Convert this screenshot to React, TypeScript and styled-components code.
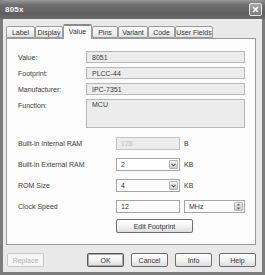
import React from 'react';
import styled, { createGlobalStyle } from 'styled-components';

const GlobalStyle = createGlobalStyle`
  html, body {
    margin: 0;
    padding: 0;
    background: #ffffff;
  }
  * {
    box-sizing: border-box;
  }
`;

const Window = styled.div`
  width: 265px;
  height: 275px;
  display: flex;
  flex-direction: column;
  background: #7c7c7c;
  font-family: 'Liberation Sans', Arial, sans-serif;
  font-size: 7px;
  color: #222;
`;

const TitleBar = styled.div`
  height: 19px;
  flex-shrink: 0;
  display: flex;
  align-items: center;
  justify-content: space-between;
  padding: 0 3px 0 5px;
  background: linear-gradient(#9a9a9a 0%, #6e6e6e 25%, #5f5f5f 70%, #6c6c6c 100%);
  border-radius: 4px 4px 0 0;
`;

const Title = styled.span`
  color: #f4f4f4;
  font-weight: bold;
  font-size: 8px;
  letter-spacing: 0.2px;
`;

const CloseButton = styled.div`
  width: 13px;
  height: 13px;
  border: 1px solid #e8e8e8;
  border-radius: 2px;
  background: linear-gradient(#a8a8a8, #7a7a7a);
  display: flex;
  align-items: center;
  justify-content: center;
`;

const Body = styled.div`
  flex: 1;
  margin: 0 3px 3px 3px;
  background: #e9e9e9;
  display: flex;
  flex-direction: column;
  padding: 4px 6px 0 3px;
`;

const TabRow = styled.div`
  display: flex;
  align-items: flex-end;
  height: 15px;
  padding-left: 0;
  position: relative;
  z-index: 1;
`;

const Tab = styled.div<{ $active?: boolean; $w: number }>`
  width: ${(p) => p.$w}px;
  height: ${(p) => (p.$active ? 15 : 12)}px;
  margin-bottom: ${(p) => (p.$active ? -1 : 0)}px;
  border: 1px solid #9b9b9b;
  border-bottom: ${(p) => (p.$active ? 'none' : '1px solid #9b9b9b')};
  border-radius: 2px 2px 0 0;
  background: ${(p) =>
    p.$active ? '#fcfcfc' : 'linear-gradient(#fdfdfd, #ececec 70%, #e0e0e0)'};
  display: flex;
  align-items: ${(p) => (p.$active ? 'flex-start' : 'center')};
  padding-top: ${(p) => (p.$active ? 2 : 0)}px;
  justify-content: center;
  color: #333;
  ${(p) => (p.$active ? 'border-top: 2px solid #8a8a8a;' : '')}
`;

const Panel = styled.div`
  height: 207px;
  border: 1px solid #9b9b9b;
  background: #fcfcfc;
  padding: 12px 10px 0 11px;
  display: flex;
  flex-direction: column;
`;

const InfoGrid = styled.div`
  display: grid;
  grid-template-columns: 68px 159px;
  grid-auto-rows: 12px;
  row-gap: 4px;
`;

const Label = styled.div<{ $top?: boolean }>`
  display: flex;
  align-items: ${(p) => (p.$top ? 'flex-start' : 'center')};
  padding-top: ${(p) => (p.$top ? 3 : 0)}px;
  color: #3a3a3a;
`;

const ReadField = styled.div<{ $tall?: boolean }>`
  grid-row: ${(p) => (p.$tall ? 'span 2' : 'auto')};
  height: ${(p) => (p.$tall ? 29 : 12)}px;
  background: #ececec;
  border: 1px solid #b8b8b8;
  padding: 1px 5px 0;
  display: flex;
  align-items: ${(p) => (p.$tall ? 'flex-start' : 'center')};
  color: #3a3a3a;
`;

const SettingsGrid = styled.div`
  margin-top: 10px;
  display: grid;
  grid-template-columns: 98px 64px 4px 61px;
  grid-auto-rows: 13px;
  row-gap: 8px;
`;

const Input = styled.div<{ $disabled?: boolean }>`
  height: 13px;
  border: 1px solid ${(p) => (p.$disabled ? '#c4c4c4' : '#a6a6a6')};
  background: ${(p) => (p.$disabled ? '#ececec' : '#ffffff')};
  color: ${(p) => (p.$disabled ? '#c0c0c0' : '#333')};
  display: flex;
  align-items: center;
  padding-left: 4px;
  position: relative;
`;

const Unit = styled.div`
  grid-column: 4;
  display: flex;
  align-items: center;
  color: #3a3a3a;
`;

const DropArrow = styled.div`
  position: absolute;
  right: 1px;
  top: 1px;
  width: 9px;
  height: 9px;
  background: linear-gradient(#f2f2f2, #cdcdcd);
  border: 1px solid #b4b4b4;
  border-radius: 1px;
  display: flex;
  align-items: center;
  justify-content: center;
`;

const Spinner = styled.div`
  position: absolute;
  right: 1px;
  top: 1px;
  width: 9px;
  height: 9px;
  border: 1px solid #b4b4b4;
  border-radius: 1px;
  background: linear-gradient(#f2f2f2, #cdcdcd);
  display: flex;
  flex-direction: column;
  align-items: center;
  justify-content: center;
  gap: 1px;
`;

const UnitField = styled(Input)`
  grid-column: 4;
`;

const ButtonRow = styled.div`
  margin-top: 6px;
  padding-left: 98px;
`;

const Button = styled.div<{ $w?: number; $disabled?: boolean; $default?: boolean }>`
  width: ${(p) => p.$w ?? 37}px;
  height: 14px;
  border: 1px solid ${(p) => (p.$disabled ? '#c8c8c8' : p.$default ? '#5a5a5a' : '#6e6e6e')};
  border-radius: 2px;
  background: ${(p) =>
    p.$disabled ? '#f6f6f6' : 'linear-gradient(#ffffff, #f0f0f0 60%, #dcdcdc)'};
  color: ${(p) => (p.$disabled ? '#b4b4b4' : '#333')};
  display: flex;
  align-items: center;
  justify-content: center;
  ${(p) => (p.$default ? 'box-shadow: inset 0 0 0 1px #a9a9a9;' : '')}
`;

const Footer = styled.div`
  display: flex;
  align-items: center;
  padding: 8px 0 0 1px;
  gap: 7px;
`;

const Spacer = styled.div`
  flex: 1;
`;

const Grip = styled.div`
  position: absolute;
  right: 4px;
  bottom: 4px;
  width: 6px;
  height: 6px;
  background-image: radial-gradient(#9a9a9a 35%, transparent 40%);
  background-size: 2px 2px;
`;

const Frame = styled.div`
  position: relative;
`;

const tabs: [string, number][] = [
  ['Label', 29],
  ['Display', 28],
  ['Value', 29],
  ['Pins', 26],
  ['Variant', 30],
  ['Code', 27],
  ['User Fields', 38],
];

const Chevron = () => (
  <svg width="5" height="4" viewBox="0 0 5 4">
    <path d="M0.5 0.8 L2.5 2.8 L4.5 0.8" stroke="#555" strokeWidth="1.1" fill="none" />
  </svg>
);

const App: React.FC = () => {
  return (
    <Frame>
      <GlobalStyle />
      <Window>
        <TitleBar>
          <Title>805x</Title>
          <CloseButton>
            <svg width="7" height="7" viewBox="0 0 7 7">
              <path d="M1 1 L6 6 M6 1 L1 6" stroke="#fff" strokeWidth="1.6" />
            </svg>
          </CloseButton>
        </TitleBar>
        <Body>
          <TabRow>
            {tabs.map(([name, w]) => (
              <Tab key={name} $w={w} $active={name === 'Value'}>
                {name}
              </Tab>
            ))}
          </TabRow>
          <Panel>
            <InfoGrid>
              <Label>Value:</Label>
              <ReadField>8051</ReadField>
              <Label>Footprint:</Label>
              <ReadField>PLCC-44</ReadField>
              <Label>Manufacturer:</Label>
              <ReadField>IPC-7351</ReadField>
              <Label $top>Function:</Label>
              <ReadField $tall>MCU</ReadField>
            </InfoGrid>
            <SettingsGrid>
              <Label>Built-in Internal RAM</Label>
              <Input $disabled>128</Input>
              <Unit>B</Unit>

              <Label>Built-in External RAM</Label>
              <Input>
                2
                <DropArrow>
                  <Chevron />
                </DropArrow>
              </Input>
              <Unit>KB</Unit>

              <Label>ROM Size</Label>
              <Input>
                4
                <DropArrow>
                  <Chevron />
                </DropArrow>
              </Input>
              <Unit>KB</Unit>

              <Label>Clock Speed</Label>
              <Input>12</Input>
              <UnitField>
                MHz
                <Spinner>
                  <svg width="5" height="3" viewBox="0 0 5 3">
                    <path d="M0.5 2.5 L2.5 0.5 L4.5 2.5" fill="#666" />
                  </svg>
                  <svg width="5" height="3" viewBox="0 0 5 3">
                    <path d="M0.5 0.5 L2.5 2.5 L4.5 0.5" fill="#666" />
                  </svg>
                </Spinner>
              </UnitField>
            </SettingsGrid>
            <ButtonRow>
              <Button $w={77}>Edit Footprint</Button>
            </ButtonRow>
          </Panel>
          <Footer>
            <Button $disabled>Replace</Button>
            <Spacer />
            <Button $default>OK</Button>
            <Button>Cancel</Button>
            <Button>Info</Button>
            <Button>Help</Button>
          </Footer>
        </Body>
      </Window>
      <Grip />
    </Frame>
  );
};

export default App;
